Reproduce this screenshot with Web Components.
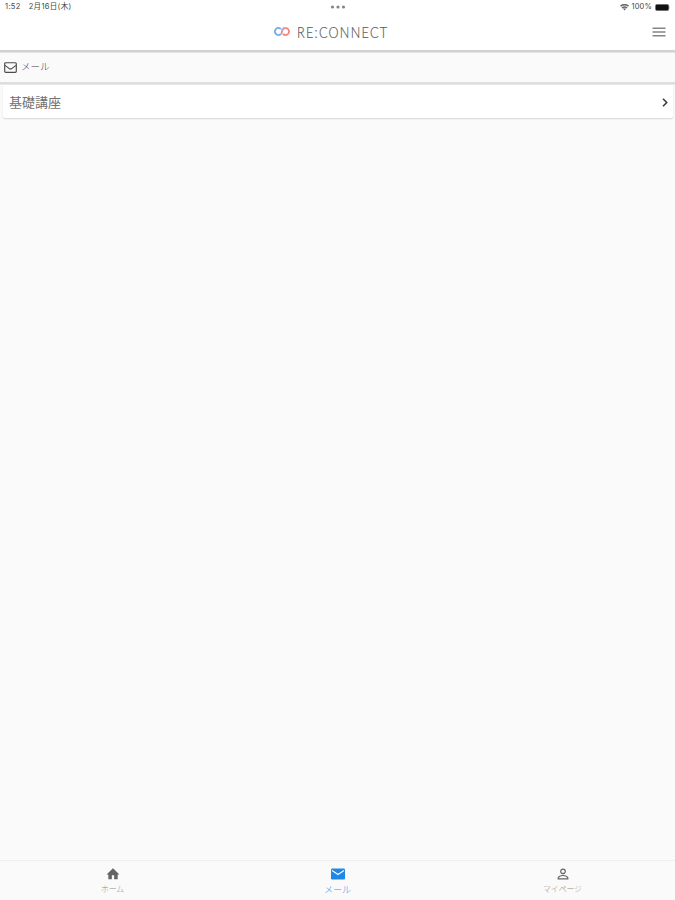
<!DOCTYPE html>
<html lang="ja">
<head>
<meta charset="utf-8">
<title>RE:CONNECT</title>
<style>
html, body { margin: 0; height: 100%; }
body { background: #fafafa; font-family: Roboto, "Noto Sans CJK JP", sans-serif; overflow: hidden; }
</style>
</head>
<body>
<mail-app></mail-app>
<script>
function define(name, html) {
  const template = document.createElement('template');
  template.innerHTML = html;
  customElements.define(name, class extends HTMLElement {
    constructor() {
      super();
      this.attachShadow({ mode: 'open' }).append(template.content.cloneNode(true));
    }
  });
}

define('status-bar', `
<style>
:host { display: grid; grid-template-columns: 1fr auto 1fr; align-items: center; height: 14px; padding: 0 4px 0 5px; font: 7.5px/14px Inter, "Noto Sans CJK JP", sans-serif; color: #444; box-sizing: border-box; }
.left { display: flex; gap: 8px; white-space: nowrap; letter-spacing: .33px; }
.right { display: flex; justify-content: flex-end; align-items: center; gap: 3px; letter-spacing: .15px; }
svg { display: block; }
</style>
<div class="left"><span>1:52</span><span>2月16日(木)</span></div>
<svg width="16" height="4" fill="#858585"><circle cx="2.5" cy="2" r="1.6"/><circle cx="8" cy="2" r="1.6"/><circle cx="13.5" cy="2" r="1.6"/></svg>
<div class="right">
<svg width="9" height="7" viewBox="0 0 9 7" fill="none" stroke="#666" stroke-width="1.5"><path d="M.5 2.2Q4.5-.9 8.5 2.2M2 4Q4.5 2 7 4"/><path d="M3 4.6h3L4.5 6.6z" fill="#555" stroke="none"/></svg>
<span>100%</span>
<svg width="16" height="7" viewBox="0 0 16 7"><rect x=".3" y=".3" width="13.6" height="6.4" rx="1.7" fill="#111" stroke="#999" stroke-width=".6"/><path d="M14.7 2.3q1 1.2 0 2.4z" fill="#aaa"/></svg>
</div>`);

define('brand-header', `
<style>
:host { display: grid; grid-template-columns: 1fr auto 1fr; align-items: center; height: 36px; padding: 0 9px; }
.brand { display: flex; align-items: center; gap: 7px; width: 115px; margin: -1px 14px 0 0; color: #5d5d5d; }
.name { font: 300 15px/16px Lato, sans-serif; letter-spacing: 1.5px; white-space: nowrap; -webkit-text-stroke: .2px #5d5d5d; transform: scaleX(.845); transform-origin: left; }
.menu { justify-self: end; margin-top: -1px; }
svg { display: block; flex: none; }
</style>
<span></span>
<div class="brand">
<svg width="17" height="11" viewBox="0 0 17 11" fill="none" stroke-width="1.8"><path d="M7.8 3A3.5 3.5 0 1 0 7.8 8" stroke="#72acee"/><path d="M8 8Q9 7 9 5.5A3.5 3.5 0 1 1 10 8" stroke="#f4847a"/><path d="M9 5Q9.6 2 12 2" stroke="#d5a0b8"/></svg>
<span class="name">RE:CONNECT</span>
</div>
<svg class="menu" width="14" height="10" fill="#858585"><path d="M.5 .5h13v1.4H.5zM.5 4.3h13v1.4H.5zM.5 8.1h13v1.4H.5z"/></svg>`);

define('section-title', `
<style>
:host { display: flex; align-items: center; gap: 4px; padding: 0 4px 1px; box-sizing: border-box; background: #fafafa; font-size: 9.5px; line-height: 14px; font-weight: 300; color: #404040; }
svg { display: block; }
</style>
<svg width="13" height="11" viewBox="0 0 13 11" fill="none" stroke="#4b4b4b" stroke-width="1.15"><rect x=".7" y=".7" width="11.6" height="9.6" rx="1"/><path d="M1 3.4l4 3q1.5 1 3 0l4-3"/></svg>
<span><slot></slot></span>`);

define('mail-row', `
<style>
:host { display: flex; align-items: center; justify-content: space-between; height: 33px; margin: 0 2px 0 3px; padding: 1px 5px 0 6px; box-sizing: border-box; background: #fff; border-radius: 2px; box-shadow: 0 1px 1.5px rgba(0,0,0,.15); font-size: 13px; color: #707070; }
svg { display: block; }
.text { margin-top: -1px; }
</style>
<span class="text"><slot></slot></span>
<svg width="6" height="9" viewBox="0 0 6 9" fill="none" stroke="#3d3d3d" stroke-width="1.6"><path d="M1 .8l3.7 3.7L1 8.2"/></svg>`);

define('nav-item', `
<style>
:host { display: flex; flex-direction: column; align-items: center; gap: 3px; flex: 1; color: #646464; }
:host([active]) { color: #1e88e5; }
.label { font-size: 7.8px; line-height: 12px; font-weight: 300; color: #8a8a8a; }
:host([active]) .label { font-size: 9px; color: #3f88e8; }
</style>
<slot name="icon"></slot><span class="label"><slot></slot></span>`);

define('bottom-nav', `
<style>
:host { display: flex; height: 40px; padding-top: 6px; box-sizing: border-box; border-top: 1px solid #f0f0f0; background: #fafafa; }
svg { display: block; fill: currentColor; }
</style>
<nav-item><svg slot="icon" width="14" height="14" viewBox="0 0 24 24"><path d="M10 21v-7h4v7h6v-8h3L12 2 1 13h3v8z"/></svg>ホーム</nav-item>
<nav-item active><svg slot="icon" width="16" height="14" viewBox="0 0 16 14"><rect x="1" y="1.5" width="14" height="11" rx="1.3"/><path d="M2 3.5l6 4 6-4" fill="none" stroke="#fafafa" stroke-width="1.2"/></svg>メール</nav-item>
<nav-item><svg slot="icon" width="14" height="14" viewBox="0 0 14 14"><g fill="none" stroke="currentColor" stroke-width="1.2"><circle cx="7" cy="4.4" r="2.3"/><path d="M2.2 11.9v-1.2Q3.2 8.5 7 8.5t4.8 2.2v1.2z"/></g></svg>マイページ</nav-item>`);

define('mail-app', `
<style>
:host { display: flex; flex-direction: column; height: 100vh; min-height: 0; }
.top { background: #fff; }
.rule { height: 3px; background: linear-gradient(#d2d2d2, #d2d2d2 55%, #ededed); }
.rule.light { background: linear-gradient(#e1e1e1, #dcdcdc 50%, #f1f1f1); }
main { flex: 1; background: #fafafa; }
section-title { height: 29px; }
</style>
<div class="top"><status-bar></status-bar><brand-header></brand-header></div>
<div class="rule"></div>
<section-title>メール</section-title>
<div class="rule light"></div>
<main><mail-row>基礎講座</mail-row></main>
<bottom-nav></bottom-nav>`);
</script>
</body>
</html>
